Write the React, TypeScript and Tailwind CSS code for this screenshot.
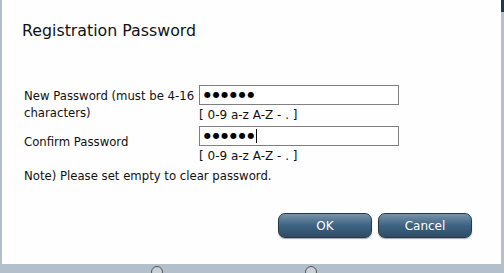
import React from 'react';

const font = { fontFamily: 'Tahoma, "DejaVu Sans", Verdana, sans-serif' };

function HintText() {
  return <div className="mt-[3px] text-[12px] leading-[14px] text-[#111]">[ 0-9 a-z A-Z - . ]</div>;
}

function PwInput({ caret = false }: { caret?: boolean }) {
  return (
    <div className="flex h-[20px] w-[200px] items-center border border-[#7f7f7f] bg-white pl-[4px] text-black">
      <span className="text-[8px] leading-none tracking-[1.7px]">●●●●●●</span>
      {caret && <span className="inline-block h-[14px] w-px bg-black" />}
    </div>
  );
}

function SkinButton({ label }: { label: string }) {
  return (
    <button className="flex h-[25px] w-[94px] items-center justify-center rounded-[7px] border border-[#26394a] bg-gradient-to-b from-[#7893aa] via-[#3d6383] to-[#2f4c65] text-[12px] text-white shadow-[0_1px_1px_rgba(0,0,0,0.35)]">
      {label}
    </button>
  );
}

export default function App() {
  return (
    <div className="relative h-[273px] w-[504px] overflow-hidden bg-[#b3bfca]" style={font}>
      {/* dark strip top-right */}
      <div className="absolute right-0 top-0 h-[12px] w-[3px] bg-[#1e3650]" />
      {/* bits of background peeking below dialog */}
      <div className="absolute left-[151px] top-[266px] h-[12px] w-[12px] rounded-full border border-[#555] bg-[#c8d0d8]" />
      <div className="absolute left-[305px] top-[266px] h-[12px] w-[12px] rounded-full border border-[#555] bg-[#c8d0d8]" />

      <div className="absolute left-[2px] top-0 flex h-[264px] w-[499px] flex-col bg-[#fefefe]">
        <div className="pl-[20px] pt-[21px] text-[15.8px] leading-[20px] text-[#111]">Registration Password</div>

        <div className="mt-[44px] flex flex-col pl-[22px]">
          <div className="flex">
            <div className="w-[175px] pt-[3px] text-[11.7px] leading-[17px] text-[#111]">
              New Password (must be 4-16 characters)
            </div>
            <div className="flex flex-col">
              <PwInput />
              <HintText />
            </div>
          </div>
          <div className="mt-[4px] flex">
            <div className="flex w-[175px] items-center pb-[4px] text-[11.7px] text-[#111]">Confirm Password</div>
            <div className="flex flex-col">
              <PwInput caret />
              <HintText />
            </div>
          </div>
          <div className="mt-[6px] text-[11.7px] leading-[14px] text-[#111]">Note) Please set empty to clear password.</div>
        </div>

        <div className="mt-auto mb-[26px] flex justify-end gap-[6px] pr-[29px]">
          <SkinButton label="OK" />
          <SkinButton label="Cancel" />
        </div>
      </div>
    </div>
  );
}
